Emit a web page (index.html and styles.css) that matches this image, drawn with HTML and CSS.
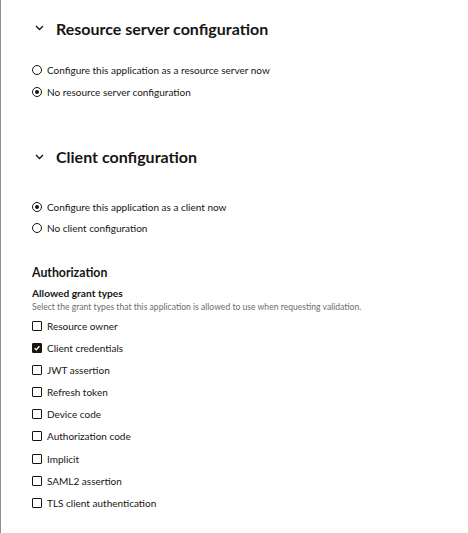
FILE: index.html
```html
<!DOCTYPE html>
<html>
<head>
<meta charset="utf-8">
<link rel="stylesheet" href="styles.css">
</head>
<body>
<div class="page">
  <section class="section">
    <h2 class="sec-title">
      <svg class="chev" width="9" height="6" viewBox="0 0 9 6"><path d="M1 1 L4.5 4.5 L8 1" fill="none" stroke="#161513" stroke-width="1.3"/></svg>
      <span>Resource server configuration</span>
    </h2>
    <div class="options first">
      <label class="opt"><span class="radio"></span>Configure this application as a resource server now</label>
      <label class="opt"><span class="radio on"></span>No resource server configuration</label>
    </div>
  </section>
  <section class="section client">
    <h2 class="sec-title">
      <svg class="chev" width="9" height="6" viewBox="0 0 9 6"><path d="M1 1 L4.5 4.5 L8 1" fill="none" stroke="#161513" stroke-width="1.3"/></svg>
      <span>Client configuration</span>
    </h2>
    <div class="options second">
      <label class="opt"><span class="radio on"></span>Configure this application as a client now</label>
      <label class="opt"><span class="radio"></span>No client configuration</label>
    </div>
  </section>
  <section class="auth">
    <h3 class="auth-title">Authorization</h3>
    <div class="field-label">Allowed grant types</div>
    <div class="help">Select the grant types that this application is allowed to use when requesting validation.</div>
    <div class="checks">
      <label class="opt"><span class="box"></span>Resource owner</label>
      <label class="opt"><span class="box on"><svg width="8" height="8" viewBox="0 0 8 8"><path d="M1.6 4.2 L3.3 5.8 L6.4 2.2" fill="none" stroke="#fff" stroke-width="1.4"/></svg></span>Client credentials</label>
      <label class="opt"><span class="box"></span>JWT assertion</label>
      <label class="opt"><span class="box"></span>Refresh token</label>
      <label class="opt"><span class="box"></span>Device code</label>
      <label class="opt"><span class="box"></span>Authorization code</label>
      <label class="opt"><span class="box"></span>Implicit</label>
      <label class="opt"><span class="box"></span>SAML2 assertion</label>
      <label class="opt"><span class="box"></span>TLS client authentication</label>
    </div>
  </section>
</div>
</body>
</html>
```
FILE: styles.css
```css
html, body {
  margin: 0;
  padding: 0;
  background: #fff;
}
body {
  font-family: Lato, "Noto Sans", sans-serif;
  color: #161513;
  width: 468px;
  height: 533px;
  overflow: hidden;
}
.page {
  border-left: 1px solid #8f8f8f;
  height: 533px;
  box-sizing: border-box;
  padding: 18px 0 0 31px;
}
.sec-title {
  margin: 0;
  display: flex;
  align-items: center;
  height: 20px;
  font-size: 16px;
  font-weight: 700;
  letter-spacing: 0;
}
.chev {
  margin-left: 3px;
  margin-right: 12px;
}
.options.first {
  margin-top: 26px;
}
.options.second {
  margin-top: 34px;
}
.client {
  margin-top: 49px;
}
.opt {
  display: flex;
  align-items: center;
  height: 12px;
  font-size: 10px;
  margin-bottom: 10px;
  white-space: nowrap;
}
.options .opt {
  margin-bottom: 9.5px;
}
.radio {
  width: 8px;
  height: 8px;
  border: 1px solid #161513;
  border-radius: 50%;
  margin-right: 5px;
  position: relative;
  flex: none;
}
.radio.on::after {
  content: "";
  position: absolute;
  left: 2px;
  top: 2px;
  width: 4px;
  height: 4px;
  border-radius: 50%;
  background: #161513;
}
.auth {
  margin-top: 31px;
}
.auth-title {
  margin: 0;
  font-size: 12.3px;
  font-weight: 700;
  height: 15px;
  line-height: 15px;
}
.field-label {
  margin-top: 7px;
  font-size: 10.2px;
  font-weight: 700;
  line-height: 13px;
}
.help {
  font-size: 8.6px;
  color: #6f6c69;
  line-height: 11px;
  margin-top: 2px;
}
.checks {
  margin-top: 7px;
}
.checks .opt {
  margin-bottom: 10.1px;
}
.box {
  width: 8px;
  height: 8px;
  border: 1px solid #161513;
  border-radius: 1px;
  margin-right: 5px;
  flex: none;
  display: flex;
  align-items: center;
  justify-content: center;
}
.box.on {
  background: #161513;
}
```
